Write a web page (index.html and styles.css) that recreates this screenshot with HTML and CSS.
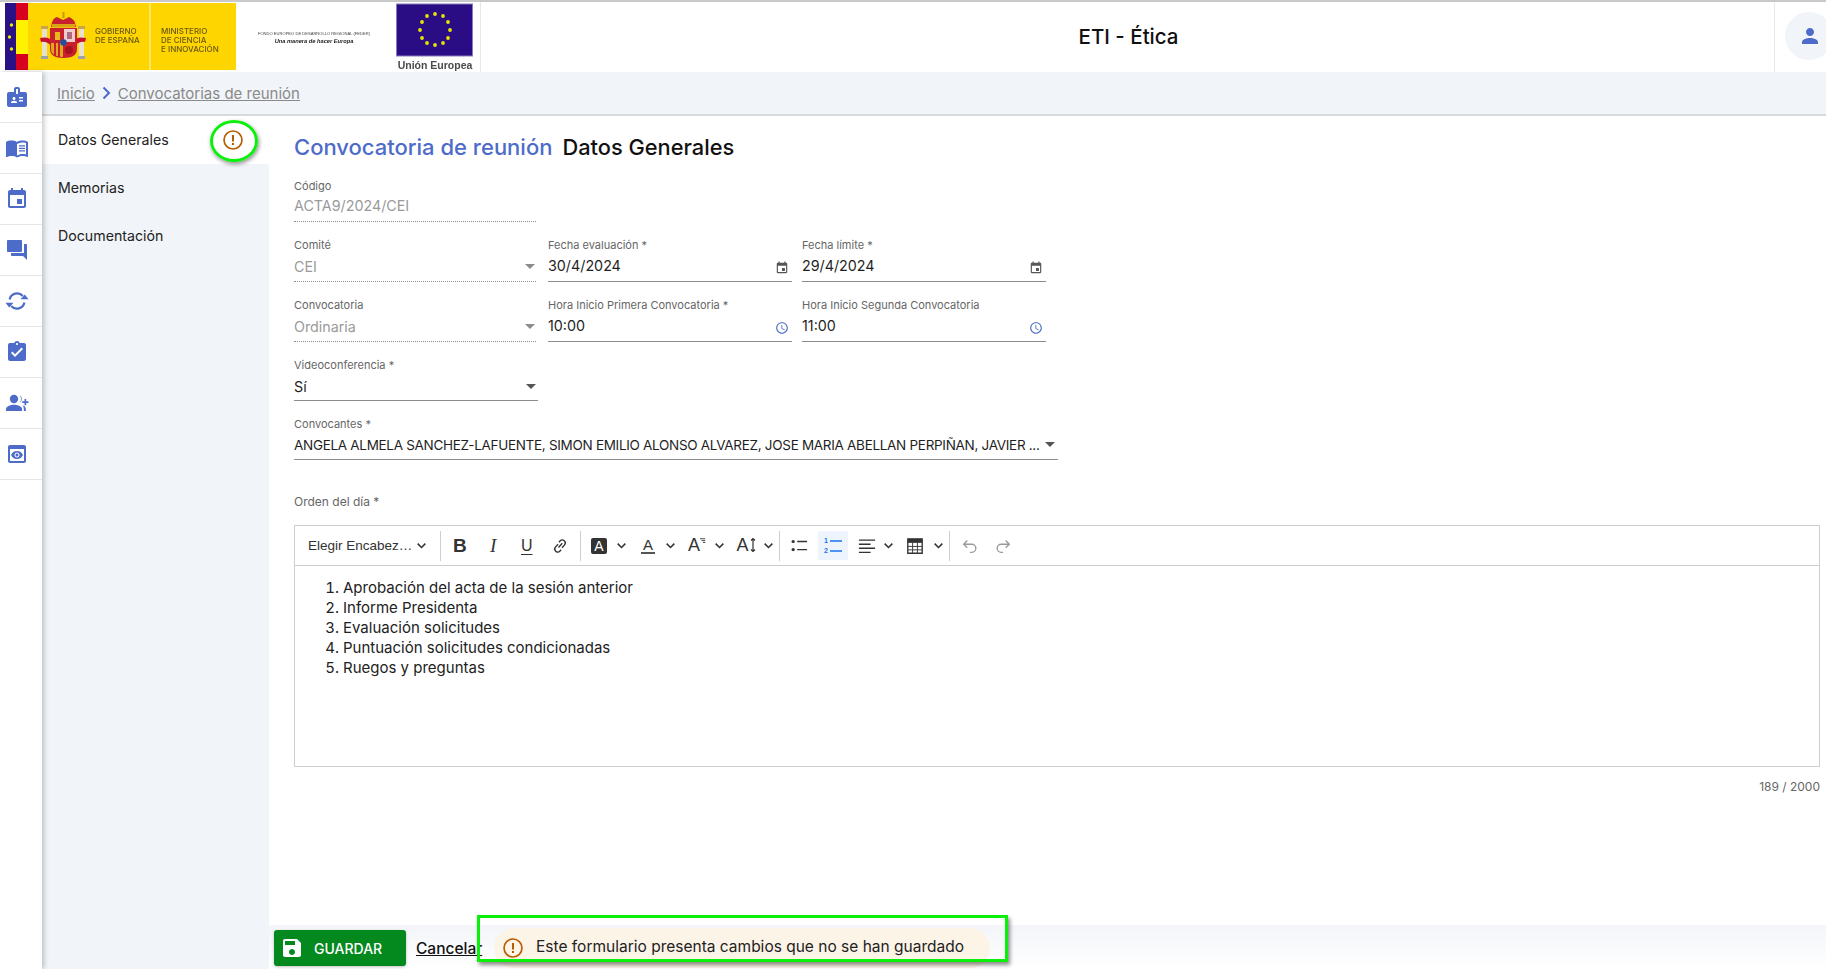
FILE: index.html
```html
<!DOCTYPE html>
<html lang="es">
<head>
<meta charset="utf-8">
<title>ETI - Ética</title>
<link rel="stylesheet" href="styles.css">
</head>
<body>
<svg class="sprite" width="0" height="0">
  <defs>
    <symbol id="i-badge" viewBox="0 0 24 24"><path d="M20 7h-5V4c0-1.100-.9-2-2-2h-2c-1.100 0-2 .9-2 2v3H4c-1.100 0-2 .9-2 2v11c0 1.100.9 2 2 2h16c1.100 0 2-.9 2-2V9c0-1.100-.9-2-2-2zM9 12c.83 0 1.500.67 1.500 1.500S9.830 15 9 15s-1.500-.67-1.500-1.500S8.170 12 9 12zm3 6H6v-.75c0-1 2-1.500 3-1.500s3 .5 3 1.500V18zm1-9h-2V4h2v5zm5 7.500h-4V15h4v1.500zm0-3h-4V12h4v1.500z"/></symbol>
    <symbol id="i-book" viewBox="0 0 24 24"><path d="M21 5c-1.110-.35-2.330-.5-3.500-.5-1.950 0-4.050.4-5.500 1.500-1.450-1.100-3.550-1.500-5.500-1.500S2.450 4.900 1 6v14.650c0 .25.25.5.5.5.1 0 .15-.05.25-.05C3.100 20.450 5.050 20 6.500 20c1.950 0 4.050.4 5.500 1.500 1.350-.85 3.800-1.500 5.500-1.500 1.650 0 3.350.3 4.750 1.050.1.05.15.05.25.05.25 0 .5-.25.5-.5V6c-.6-.45-1.250-.75-2-1zm0 13.500c-1.100-.35-2.300-.5-3.500-.5-1.700 0-4.150.65-5.500 1.500V8c1.350-.85 3.800-1.500 5.500-1.500 1.200 0 2.400.15 3.500.5v11.500z"/><path d="M14 9.200h6v1.300h-6zM14 11.700h6V13h-6zM14 14.200h6v1.300h-6z"/></symbol>
    <symbol id="i-event" viewBox="0 0 24 24"><path d="M17 12h-5v5h5v-5zM16 1v2H8V1H6v2H5c-1.110 0-1.990.9-1.990 2L3 19c0 1.100.89 2 2 2h14c1.100 0 2-.9 2-2V5c0-1.100-.9-2-2-2h-1V1h-2zm3 18H5V8h14v11z"/></symbol>
    <symbol id="i-forum" viewBox="0 0 24 24"><path d="M21 6h-2v9H6v2c0 .55.45 1 1 1h11l4 4V7c0-.55-.45-1-1-1zm-4 6V3c0-.55-.45-1-1-1H3c-.55 0-1 .45-1 1v10c0 .55.45 1 1 1h13c.55 0 1-.45 1-1z"/></symbol>
    <symbol id="i-sync" viewBox="0 0 24 24"><path d="M4.600 10.500A7.600 7.600 0 0 1 17.800 7" fill="none" stroke="currentColor" stroke-width="2.200"/><path d="M19.400 13.500A7.600 7.600 0 0 1 6.200 17" fill="none" stroke="currentColor" stroke-width="2.200"/><path d="M23.500 10.200h-8l4.300-4.600zM.5 13.800h8l-4.300 4.600z"/></symbol>
    <symbol id="i-task" viewBox="0 0 24 24"><path d="M19 3h-4.180C14.400 1.840 13.300 1 12 1c-1.300 0-2.400.84-2.820 2H5c-1.100 0-2 .9-2 2v14c0 1.100.9 2 2 2h14c1.100 0 2-.9 2-2V5c0-1.100-.9-2-2-2zm-7 0c.55 0 1 .45 1 1s-.45 1-1 1-1-.45-1-1 .45-1 1-1zm-2 14l-4-4 1.410-1.410L10 14.170l6.590-6.590L18 9l-8 8z"/></symbol>
    <symbol id="i-groupadd" viewBox="0 0 24 24"><circle cx="9" cy="8" r="4.200"/><path d="M1 20v-2c0-2.800 5.300-4.200 8-4.200s8 1.400 8 4.200v2z"/><path d="M14.600 4.200a4.400 4.400 0 0 1 0 7.600 6 6 0 0 0 0-7.600zM17.500 14.200c2 .6 3.300 1.800 3.300 3.800v2h-2v-2.400c0-1.400-.5-2.500-1.300-3.400z"/><path d="M19.500 8h1.700v2.300h2.300V12h-2.300v2.300h-1.700V12h-2.300v-1.700h2.300z"/></symbol>
    <symbol id="i-preview" viewBox="0 0 24 24"><path d="M19 3H5c-1.110 0-2 .9-2 2v14c0 1.100.89 2 2 2h14c1.100 0 2-.9 2-2V5c0-1.100-.89-2-2-2zm0 16H5V7h14v12zm-5.500-6c0 .83-.67 1.500-1.500 1.500s-1.500-.67-1.500-1.500.67-1.500 1.500-1.500 1.500.67 1.500 1.500zM12 9c-2.730 0-5.060 1.660-6 4 .94 2.340 3.270 4 6 4s5.060-1.660 6-4c-.94-2.340-3.270-4-6-4zm0 6.500c-1.380 0-2.500-1.120-2.500-2.500s1.120-2.500 2.500-2.500 2.500 1.120 2.500 2.500-1.120 2.500-2.500 2.500z"/></symbol>
    <symbol id="i-clock" viewBox="0 0 24 24"><path d="M11.990 2C6.470 2 2 6.480 2 12s4.470 10 9.990 10C17.520 22 22 17.520 22 12S17.520 2 11.990 2zM12 20c-4.420 0-8-3.580-8-8s3.580-8 8-8 8 3.580 8 8-3.580 8-8 8zm.5-13H11v6l5.250 3.150.75-1.230-4.500-2.670z"/></symbol>
    <symbol id="i-save" viewBox="0 0 24 24"><path d="M17 3H5c-1.110 0-2 .9-2 2v14c0 1.100.89 2 2 2h14c1.100 0 2-.9 2-2V7l-4-4zm-5 16c-1.660 0-3-1.340-3-3s1.340-3 3-3 3 1.340 3 3-1.340 3-3 3zm3-10H5V5h10v4z"/></symbol>
    <symbol id="i-person" viewBox="0 0 24 24"><path d="M12 12c2.210 0 4-1.790 4-4s-1.790-4-4-4-4 1.790-4 4 1.790 4 4 4zm0 2c-2.670 0-8 1.340-8 4v2h16v-2c0-2.660-5.330-4-8-4z"/></symbol>
    <symbol id="i-warn" viewBox="0 0 24 24"><circle cx="12" cy="12" r="9.800" fill="none" stroke="currentColor" stroke-width="1.800"/><path d="M10.900 6.500h2.200v7.200h-2.200zM10.900 15.300h2.200v2.200h-2.200z"/></symbol>
    <symbol id="i-chev" viewBox="0 0 10 10"><path d="M1.500 3.300 5 6.800l3.500-3.500" fill="none" stroke="currentColor" stroke-width="1.400"/></symbol>
  </defs>
</svg>

<header class="topbar">
  <svg class="logos" viewBox="0 0 480 70" width="480" height="70" aria-label="Logos">
    <rect x="5" y="1" width="231" height="67" fill="#ffd500"/>
    <rect x="5" y="1" width="11" height="67" fill="#2b1186"/>
    <rect x="16" y="1" width="12" height="17" fill="#d8001e"/>
    <rect x="16" y="18" width="12" height="34" fill="#fff200"/>
    <rect x="16" y="52" width="12" height="16" fill="#d8001e"/>
    <circle cx="11.500" cy="23" r="1.700" fill="#e8e800"/><circle cx="9.500" cy="35" r="1.700" fill="#e8e800"/><circle cx="11.500" cy="47" r="1.700" fill="#e8e800"/>
    <rect x="149" y="1" width="2" height="67" fill="#ffe566"/>
    <g transform="translate(0 -2)">
      <rect x="42" y="28" width="5" height="28" fill="#e6e0d0"/><rect x="79" y="28" width="5" height="28" fill="#e6e0d0"/>
      <rect x="41" y="26" width="7" height="3" fill="#c9a24a"/><rect x="78" y="26" width="7" height="3" fill="#c9a24a"/>
      <rect x="41" y="56" width="7" height="3" fill="#9aa3a8"/><rect x="78" y="56" width="7" height="3" fill="#9aa3a8"/>
      <path d="M40 38q9-2 12 3l-1 5q-4-5-10-4zM86 38q-9-2-12 3l1 5q4-5 10-4z" fill="#c8102e"/>
      <path d="M50 28h27v21q0 9-13.500 9T50 49z" fill="#c8202c"/>
      <rect x="52" y="30" width="11" height="12" fill="#c8202c"/><rect x="55" y="32" width="5" height="8" fill="#e8b91c"/>
      <rect x="64" y="29" width="11" height="13" fill="#eeccd0"/><rect x="67" y="32" width="5" height="7" fill="#b06a80"/>
      <path d="M51 43h12v14q-6 0-10-3-2-2-2-5z" fill="#e0a81c"/>
      <path d="M54 43h2v13h-2zM58 43h2v14h-2z" fill="#c8202c"/>
      <circle cx="69" cy="50" r="4" fill="#a81020"/>
      <circle cx="63.500" cy="42.500" r="3.200" fill="#23509c"/>
      <path d="M51 27q1-9 6-10l6 3 6-3q6 2 7 10z" fill="#c8202c"/>
      <rect x="52" y="24" width="23" height="3.500" fill="#d9a514"/>
      <rect x="62.500" y="12" width="2" height="6" fill="#c89a10"/>
    </g>
    <g class="lg-t">
      <text class="lg-a" x="95" y="32">GOBIERNO</text><text class="lg-a" x="95" y="41">DE ESPAÑA</text>
      <text class="lg-a" x="161" y="32">MINISTERIO</text><text class="lg-a" x="161" y="41">DE CIENCIA</text><text class="lg-a" x="161" y="50">E INNOVACIÓN</text>
    </g>
    <text class="lg-b" x="314" y="33" text-anchor="middle">FONDO EUROPEO DE DESARROLLO REGIONAL (FEDER)</text>
    <text class="lg-c" x="314" y="41" text-anchor="middle">Una manera de hacer Europa</text>
    <rect x="396.500" y="2" width="76" height="52" fill="#2a0c85" stroke="#8a7cc0"/>
    <g fill="#e6e600">
      <circle cx="435" cy="12" r="1.900"/><circle cx="443" cy="14" r="1.900"/><circle cx="448" cy="20" r="1.900"/><circle cx="450" cy="28" r="1.900"/><circle cx="448" cy="36" r="1.900"/><circle cx="443" cy="41" r="1.900"/><circle cx="435" cy="43" r="1.900"/><circle cx="427" cy="41" r="1.900"/><circle cx="422" cy="36" r="1.900"/><circle cx="420" cy="28" r="1.900"/><circle cx="422" cy="20" r="1.900"/><circle cx="427" cy="14" r="1.900"/>
    </g>
    <text class="lg-d" x="435" y="67" text-anchor="middle">Unión Europea</text>
  </svg>
  <h1 class="app-title">ETI - Ética</h1>
  <div class="user-cell"><span class="user-badge"><svg class="ic-user"><use href="#i-person"/></svg></span></div>
</header>

<div class="shell">
  <nav class="rail">
    <a class="rail-item"><svg class="rail-ic"><use href="#i-badge"/></svg></a>
    <a class="rail-item"><svg class="rail-ic"><use href="#i-book"/></svg></a>
    <a class="rail-item"><svg class="rail-ic"><use href="#i-event"/></svg></a>
    <a class="rail-item"><svg class="rail-ic"><use href="#i-forum"/></svg></a>
    <a class="rail-item"><svg class="rail-ic"><use href="#i-sync"/></svg></a>
    <a class="rail-item"><svg class="rail-ic"><use href="#i-task"/></svg></a>
    <a class="rail-item"><svg class="rail-ic"><use href="#i-groupadd"/></svg></a>
    <a class="rail-item"><svg class="rail-ic"><use href="#i-preview"/></svg></a>
  </nav>

  <div class="content">
    <div class="crumbs">
      <a class="crumb">Inicio</a>
      <svg class="crumb-sep" viewBox="0 0 10 14"><path d="M2 1.500 7.500 7 2 12.500" fill="none" stroke="currentColor" stroke-width="2"/></svg>
      <a class="crumb">Convocatorias de reunión</a>
    </div>

    <div class="workspace">
      <aside class="tabs">
        <div class="tab tab-active">Datos Generales
          <svg class="tab-warn"><use href="#i-warn"/></svg>
          <span class="mark-circle"></span>
        </div>
        <div class="tab">Memorias</div>
        <div class="tab">Documentación</div>
      </aside>

      <main class="panel">
        <div class="form">
          <h2 class="page-title"><span class="pt-a">Convocatoria de reunión</span><span class="pt-b">Datos Generales</span></h2>

          <div class="grid">
            <div class="field off narrow short"><label>Código</label><div class="val up">ACTA9/2024/CEI</div></div>
            <div></div><div></div>

            <div class="field off narrow"><label>Comité</label><div class="val">CEI<i class="caret"></i></div></div>
            <div class="field"><label>Fecha evaluación *</label><div class="val up">30/4/2024<svg class="fi grey"><use href="#i-event"/></svg></div></div>
            <div class="field"><label>Fecha límite *</label><div class="val up">29/4/2024<svg class="fi grey"><use href="#i-event"/></svg></div></div>

            <div class="field off narrow"><label>Convocatoria</label><div class="val">Ordinaria<i class="caret"></i></div></div>
            <div class="field"><label>Hora Inicio Primera Convocatoria *</label><div class="val up">10:00<svg class="fi blue"><use href="#i-clock"/></svg></div></div>
            <div class="field"><label>Hora Inicio Segunda Convocatoria</label><div class="val up">11:00<svg class="fi blue"><use href="#i-clock"/></svg></div></div>

            <div class="field short"><label>Videoconferencia *</label><div class="val">Sí<i class="caret dark"></i></div></div>
            <div></div><div></div>

            <div class="field wide short"><label>Convocantes *</label><div class="val long">ANGELA ALMELA SANCHEZ-LAFUENTE, SIMON EMILIO ALONSO ALVAREZ, JOSE MARIA ABELLAN PERPIÑAN, JAVIER ...<i class="caret dark"></i></div></div>
          </div>

          <div class="editor-label">Orden del día *</div>
          <div class="editor">
            <div class="toolbar">
              <div class="tb-head">Elegir Encabez…<svg class="chev"><use href="#i-chev"/></svg></div>
              <i class="tb-sep"></i>
              <span class="tb-btn tb-b">B</span>
              <span class="tb-btn tb-i">I</span>
              <span class="tb-btn tb-u">U</span>
              <span class="tb-btn"><svg class="tb-ic" viewBox="0 0 20 20"><path d="M8.300 11.700 12.500 7M7.800 8l-2.700 3a3.300 3.300 0 0 0 4.900 4.500l1.200-1.300M12.200 12l2.700-3A3.300 3.300 0 0 0 10 4.500L8.800 5.800" fill="none" stroke="#333" stroke-width="1.500"/></svg></span>
              <i class="tb-sep sep-a"></i>
              <span class="tb-split"><span class="tb-abg">A</span><svg class="chev"><use href="#i-chev"/></svg></span>
              <span class="tb-split"><span class="tb-acol">A</span><svg class="chev"><use href="#i-chev"/></svg></span>
              <span class="tb-split"><span class="tb-afam">A<svg class="tb-sub" viewBox="0 0 8 8"><path d="M0 1h7M2 3.500h5M4 6h3" stroke="#333" stroke-width="1.200"/></svg></span><svg class="chev"><use href="#i-chev"/></svg></span>
              <span class="tb-split"><span class="tb-asize">A<svg class="tb-sub2" viewBox="0 0 6 14"><path d="M3 0v14M1 2.500 3 .5l2 2M1 11.500l2 2 2-2" fill="none" stroke="#333" stroke-width="1.200"/></svg></span><svg class="chev"><use href="#i-chev"/></svg></span>
              <i class="tb-sep sep-b"></i>
              <span class="tb-btn"><svg class="tb-ic" viewBox="0 0 20 20"><circle cx="3.500" cy="5" r="1.800" fill="#333"/><circle cx="3.500" cy="14" r="1.800" fill="#333"/><path d="M8 5h11M8 14h11" stroke="#333" stroke-width="1.600"/></svg></span>
              <span class="tb-list-on"><span class="tb-num">1<br>2</span><svg class="tb-numlines" viewBox="0 0 12 20"><path d="M0 5h12M0 15h12" stroke="#1a73f0" stroke-width="1.600"/></svg></span>
              <span class="tb-split sp-align"><svg class="tb-ic" viewBox="0 0 20 20"><path d="M1 3.500h18M1 8h13M1 12.500h18M1 17h13" stroke="#333" stroke-width="1.500"/></svg><svg class="chev"><use href="#i-chev"/></svg></span>
              <span class="tb-split sp-table"><svg class="tb-ic" viewBox="0 0 20 20"><path d="M2 2h16v16H2z" fill="#fff" stroke="#333" stroke-width="1.500"/><path d="M2 2h16v4.500H2z" fill="#333"/><path d="M2 10.500h16M2 14.300h16M7.300 6v12M12.700 6v12" stroke="#333" stroke-width="1"/></svg><svg class="chev"><use href="#i-chev"/></svg></span>
              <i class="tb-sep sep-c"></i>
              <span class="tb-btn"><svg class="tb-ic" viewBox="0 0 20 20"><path d="M7 4 3 8l4 4M3 8h9a4.500 4.500 0 0 1 0 9h-2" fill="none" stroke="#9a9a9a" stroke-width="1.500"/></svg></span>
              <span class="tb-btn"><svg class="tb-ic" viewBox="0 0 20 20"><path d="m13 4 4 4-4 4M17 8H8a4.500 4.500 0 0 0 0 9h2" fill="none" stroke="#9a9a9a" stroke-width="1.500"/></svg></span>
            </div>
            <div class="editor-body">
              <ol>
                <li>Aprobación del acta de la sesión anterior</li>
                <li>Informe Presidenta</li>
                <li>Evaluación solicitudes</li>
                <li>Puntuación solicitudes condicionadas</li>
                <li>Ruegos y preguntas</li>
              </ol>
            </div>
          </div>
          <div class="counter">189 / 2000</div>
        </div>

        <footer class="actions">
          <button class="btn-save"><svg class="save-ic"><use href="#i-save"/></svg>GUARDAR</button>
          <a class="cancel">Cancelar</a>
          <div class="notice"><svg class="notice-ic"><use href="#i-warn"/></svg><span class="notice-text">Este formulario presenta cambios que no se han guardado</span></div>
          <span class="mark-rect"></span>
        </footer>
      </main>
    </div>
  </div>
</div>
</body>
</html>
```

FILE: styles.css
```css
* { box-sizing: border-box; }
html, body { margin: 0; height: 100%; }
body {
  width: 1826px; height: 969px; overflow: hidden;
  display: flex; flex-direction: column;
  font-family: Inter, "Noto Sans", "Liberation Sans", sans-serif;
  color: #1f1f1f; background: #fff;
}
.sprite { position: absolute; }

/* header */
.topbar {
  height: 72px; flex: none; display: flex; align-items: stretch;
  border-top: 2px solid #c9c9c9; background: #fff;
}
.logos { flex: none; filter: blur(.35px); width: 480px; height: 70px; }
.lg-a { font: 500 8px Inter, sans-serif; fill: #6a5a10; }
.lg-b { font: 4.100px "Liberation Sans", sans-serif; fill: #444; }
.lg-c { font: italic 700 5.700px "Liberation Sans", sans-serif; fill: #222; }
.lg-d { font: 700 10.500px "Liberation Sans", sans-serif; fill: #4a4a4a; }
.app-title {
  flex: 1; margin: 0; padding: 0 0 2px 2px; border-left: 1px solid #e8e8e8;
  display: flex; align-items: center; justify-content: center;
  font-weight: 500; font-size: 20.500px; color: #111;
}
.user-cell { width: 52px; flex: none; border-left: 1px solid #e8e8e8; padding: 10px 0 0 10px; overflow: hidden; }
.user-badge { display: flex; align-items: center; padding-left: 13px; width: 48px; height: 48px; border-radius: 50%; background: #f1f4f8; flex: none; }
.ic-user { width: 24px; height: 24px; fill: #4d6bc9; flex: none; }

.shell { flex: 1; display: flex; min-height: 0; }

/* rail */
.rail { width: 42px; flex: none; background: #fff; box-shadow: 2px 0 5px rgba(0,0,0,.22); position: relative; z-index: 2; }
.rail-item { display: flex; height: 51px; align-items: center; justify-content: center; border-bottom: 1px solid #e6e6e6; padding-right: 8px; }
.rail-ic { width: 24px; height: 24px; fill: #4d6bc9; color: #4d6bc9; }

.content { flex: 1; min-width: 0; display: flex; flex-direction: column; }
.crumbs {
  height: 44px; flex: none; display: flex; align-items: center; gap: 6px;
  padding-left: 15px; background: #f1f4f8; border-bottom: 2px solid #d9d9d9;
  font-size: 15px;
}
.crumb { color: #8a8a8a; text-decoration: underline; }
.crumb-sep { width: 11px; height: 14px; color: #4d6bc9; }

.workspace { flex: 1; min-height: 0; display: flex; }

/* tabs */
.tabs { width: 227px; flex: none; background: #f1f4f8; }
.tab { height: 48px; display: flex; align-items: center; padding: 0 0 1px 16px; font-size: 14.200px; font-weight: 400; color: #222; position: relative; }
.tab-active { background: #fff; }
.tab-warn { position: absolute; left: 180px; top: 13px; width: 22px; height: 22px; fill: #b85c00; color: #b85c00; }
.mark-circle { position: absolute; left: 168px; top: 4px; width: 48px; height: 42px; border: 3px solid #0bf00b; border-radius: 50%; box-shadow: 1px 2px 4px rgba(0,0,0,.45); }

/* form */
.panel { flex: 1; min-width: 0; display: flex; flex-direction: column; }
.form { flex: 1; padding: 18px 6px 0 25px; }
.page-title { margin: 0 0 18px; display: flex; gap: 10px; font-size: 22px; font-weight: 500; line-height: 26px; }
.pt-a { color: #4d6bc9; }
.pt-b { color: #111; font-size: 21.800px; }

.grid { display: grid; grid-template-columns: repeat(3, 244px); grid-template-rows: 44px 45px 45px 44px 44px; column-gap: 10px; row-gap: 15px; width: 752px; }
.field { height: 45px; display: flex; flex-direction: column; position: relative; }
.field.short { height: 44px; }
.field label { font-size: 11px; line-height: 16px; color: #666; }
.val { flex: 1; display: flex; align-items: center; font-size: 14.300px; color: #1f1f1f; border-bottom: 1px solid #8c8c8c; padding: 0 2px 1px 0; white-space: nowrap; position: relative; }
.val.up { padding-bottom: 4px; }
.val.long { font-size: 13.500px; letter-spacing: -.3px; padding-bottom: 1px; }
.off .val { color: #9a9a9a; border-bottom: 1px dotted #8c8c8c; }
.narrow .val { margin-right: 2px; }
.wide { width: 764px; }
.caret { position: absolute; right: 2px; top: 11px; width: 0; height: 0; border-left: 5px solid transparent; border-right: 5px solid transparent; border-top: 5px solid #8c8c8c; }
.narrow .caret { right: 1px; }
.wide .caret { right: 3px; top: 10px; }
.caret.dark { border-top-color: #555; }
.fi { position: absolute; right: 3px; top: 8px; width: 14px; height: 14px; }
.fi.grey { fill: #555; }
.fi.blue { fill: #4d6bc9; }

/* editor */
.editor-label { margin-top: 34px; font-size: 12px; line-height: 16px; color: #666; }
.editor { margin-top: 15px; border: 1px solid #cfcfcf; height: 242px; }
.toolbar { height: 40px; display: flex; align-items: center; padding-left: 13px; border-bottom: 1px solid #cfcfcf; }
.tb-head { width: 129px; display: flex; align-items: center; justify-content: space-between; padding-right: 10px; font: 13.500px "Liberation Sans", sans-serif; color: #333; white-space: nowrap; }
.chev { width: 11px; height: 11px; color: #333; flex: none; }
.tb-sep { width: 1px; height: 30px; background: #cfcfcf; margin: 0 2px 0 3px; flex: none; }
.sep-a { margin: 0 4px 0 3px; }
.sep-b { margin: 0 2px 0 -2px; }
.sep-c { margin: 0 3px 0 1px; }
.tb-btn { width: 33.500px; height: 30px; display: flex; align-items: center; justify-content: center; flex: none; color: #333; }
.tb-b { font: 700 19px "Liberation Sans", sans-serif; }
.tb-i { font: italic 400 19px "Liberation Serif", serif; }
.tb-u { font: 400 16px "Liberation Sans", sans-serif; text-decoration: underline; text-underline-offset: 3px; }
.tb-ic { width: 18px; height: 18px; flex: none; }
.tb-split { width: 44px; margin-right: 5px; height: 30px; display: grid; grid-template-columns: 28px 16px; align-items: center; justify-items: center; flex: none; }
.tb-abg { width: 16px; height: 16px; background: #333; color: #fff; font: 14px "Liberation Sans", sans-serif; display: flex; align-items: center; justify-content: center; border-radius: 2px; }
.tb-acol { font: 15px/15px "Liberation Sans", sans-serif; color: #333; border-bottom: 2px solid #555; padding: 0 2px; }
.tb-afam, .tb-asize { font: 18px "Liberation Sans", sans-serif; color: #333; display: flex; align-items: flex-start; }
.tb-sub { width: 6px; height: 6px; margin-top: 3px; }
.tb-sub2 { width: 6px; height: 14px; margin: 3px 0 0 1px; }
.tb-list-on { width: 30px; height: 29px; margin: 0 2px 0 2.500px; background: #edf4fe; border-radius: 2px; display: flex; align-items: center; justify-content: center; gap: 2px; flex: none; }
.tb-num { font: 700 7px/10px "Liberation Sans", sans-serif; color: #1a73f0; text-align: center; }
.tb-numlines { width: 12px; height: 20px; }
.sp-align { width: 42px; margin: 0 5px; grid-template-columns: 24px 18px; }
.sp-table { margin-right: 0; grid-template-columns: 26px 20px; width: 46px; }

.editor-body { padding: 12px 0 0; font-size: 15px; line-height: 20px; color: #222; }
.editor-body ol { margin: 0; padding-left: 48px; }
.counter { text-align: right; font-size: 12px; line-height: 16px; color: #666; margin-top: 12px; }

/* footer */
.actions { height: 44px; flex: none; display: flex; align-items: center; gap: 10px; padding: 2px 0 0 5px; background: linear-gradient(#f3f5f9, #fff); position: relative; }
.btn-save { width: 132px; height: 36px; border: 0; border-radius: 3px; background: #04891e; color: #fff; display: flex; align-items: center; padding: 0 0 0 6px; gap: 10px; font: 500 14px Inter, sans-serif; box-shadow: 0 1px 3px rgba(0,0,0,.25); }
.save-ic { width: 24px; height: 24px; fill: #fff; flex: none; }
.cancel { font-size: 15.500px; font-weight: 500; color: #111; text-decoration: underline; }
.notice { position: absolute; left: 225px; top: 3px; width: 496px; height: 40px; display: flex; align-items: center; gap: 12px; padding-left: 8px; background: #fdf4e8; border-radius: 20px; font-size: 15.500px; color: #222; }
.notice-text { padding-bottom: 3px; }
.notice-ic { width: 22px; height: 22px; fill: #b85c00; color: #b85c00; flex: none; }
.mark-rect { position: absolute; left: 208px; top: -10px; width: 531px; height: 47px; border: 3px solid #0bf00b; box-shadow: 2px 3px 4px rgba(0,0,0,.45); }
```
